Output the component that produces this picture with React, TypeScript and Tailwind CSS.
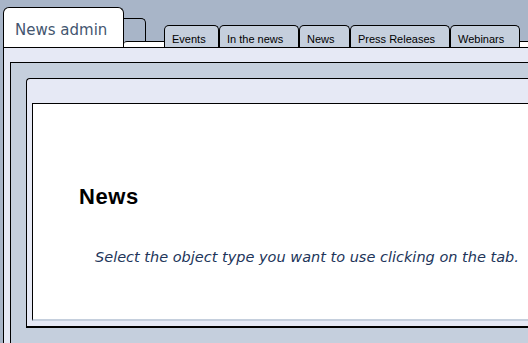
import React from 'react';

const tabs = [
  { label: 'Events', width: 'w-[55px]' },
  { label: 'In the news', width: 'w-[80px]' },
  { label: 'News', width: 'w-[51px]' },
  { label: 'Press Releases', width: 'w-[100px]' },
  { label: 'Webinars', width: 'w-[70px]' },
];

export default function App() {
  return (
    <div className="h-[343px] w-full overflow-hidden bg-[#a8b5c8] pl-[3px]">
      <div className="w-[620px]">
        {/* tab strip */}
        <div className="flex h-[47px]">
          <div className="mt-[7px] h-[40px] w-[121px] shrink-0 rounded-t-[6px] border border-b-0 border-black bg-white pl-[11px] pt-[13px] font-['DejaVu_Sans',sans-serif] text-[15px] leading-[18px] text-[#44566f]">
            News admin
          </div>
          <div className="relative flex flex-1 items-end">
            <div className="absolute inset-x-0 bottom-0 h-[6px] rounded-tl-[3px] border-t border-black bg-white" />
            <div className="relative mb-[6px] h-[23px] w-[22px] shrink-0 rounded-tr-[5px] border-t border-r border-black" />
            <div className="relative ml-[18px] flex">
              {tabs.map((t) => (
                <div
                  key={t.label}
                  className={`${t.width} h-[22px] shrink-0 rounded-t-[5px] border border-b-0 border-black bg-[#c5cfdd] pl-[7px] pt-[7px] font-['Liberation_Sans',Arial,sans-serif] text-[11px] leading-[13px] whitespace-nowrap text-black`}
                >
                  {t.label}
                </div>
              ))}
            </div>
          </div>
        </div>

        {/* outer panel */}
        <div className="h-[320px] border-t border-l border-black bg-[#e6e9f5] pl-[6px] pt-[14px]">
          <div className="h-[320px] border-t border-l border-black bg-[#c5cfdd] pl-[15px] pt-[15px]">
            <div className="rounded-tl-[4px] border-t border-l border-b-2 border-black bg-[#e6e9f5] pl-[5px] pt-[24px] pb-[5px]">
              <div className="h-[218px] border-t border-l border-b-2 border-t-black border-l-black border-b-[#c5cfdd] bg-white pl-[46px] pt-[81px]">
                <h1 className="font-['Liberation_Sans',Arial,sans-serif] text-[22px] leading-[24px] font-bold tracking-[0.6px] text-black">News</h1>
                <p className="mt-[40px] pl-[16px] font-['DejaVu_Sans',sans-serif] text-[14.5px] leading-[17px] italic whitespace-nowrap text-[#22355a]">
                  Select the object type you want to use clicking on the tab.
                </p>
              </div>
            </div>
          </div>
        </div>
      </div>
    </div>
  );
}
